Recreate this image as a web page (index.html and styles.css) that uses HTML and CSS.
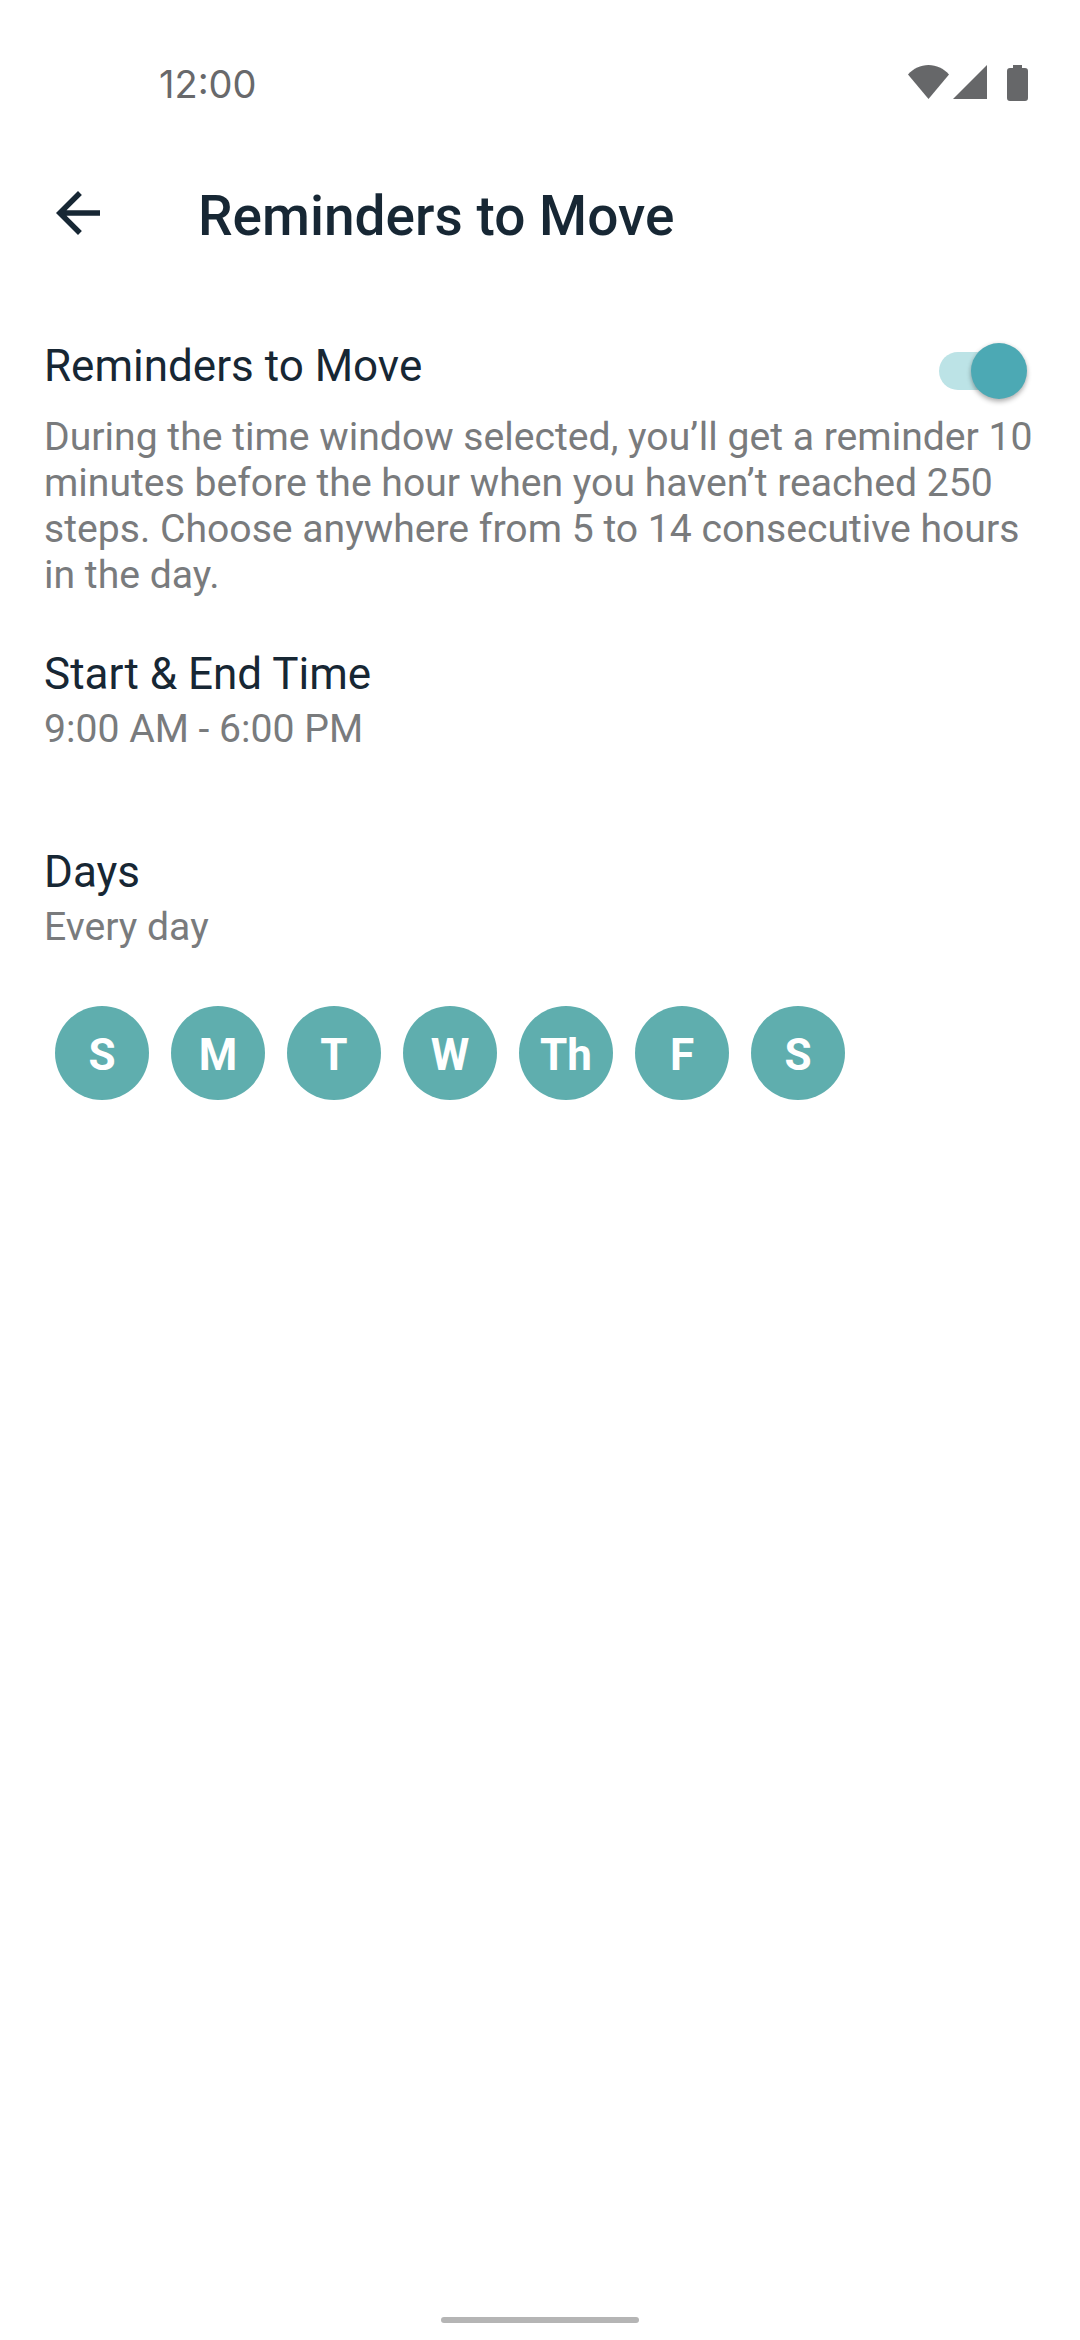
FILE: index.html
```html
<!DOCTYPE html>
<html lang="en">
<head>
<meta charset="utf-8">
<title>Reminders to Move</title>
<link rel="stylesheet" href="styles.css">
</head>
<body>
<div class="screen">
  <header class="status-bar">
    <span class="clock">12:00</span>
    <div class="status-icons">
      <svg class="ic-wifi" viewBox="0 0 41 34" aria-hidden="true"><path d="M0 9.500C5.500 3.500 12.500 0 20.500 0S35.500 3.500 41 9.500L20.500 34z"/></svg>
      <svg class="ic-signal" viewBox="0 0 34 34" aria-hidden="true"><path d="M34 0v34H0z"/></svg>
      <svg class="ic-battery" viewBox="0 0 21 36" aria-hidden="true"><path d="M6 0h9v3h3a3 3 0 0 1 3 3v27a3 3 0 0 1-3 3H3a3 3 0 0 1-3-3V6a3 3 0 0 1 3-3h3z"/></svg>
    </div>
  </header>

  <div class="app-bar">
    <svg class="ic-back" viewBox="0 0 24 24" aria-hidden="true"><path d="M20 11H7.830l5.590-5.590L12 4l-8 8 8 8 1.410-1.410L7.830 13H20v-2z"/></svg>
    <h1 class="app-title">Reminders to Move</h1>
  </div>

  <main class="content">
    <section class="toggle-section">
      <div class="toggle-row">
        <h2 class="label">Reminders to Move</h2>
        <div class="switch"><span class="switch-track"></span><span class="switch-thumb"></span></div>
      </div>
      <p class="desc">During the time window selected, you’ll get a reminder 10 minutes before the hour when you haven’t reached 250 steps. Choose anywhere from 5 to 14 consecutive hours in the day.</p>
    </section>

    <section class="time-section">
      <h2 class="label">Start &amp; End Time</h2>
      <p class="value">9:00 AM - 6:00 PM</p>
    </section>

    <section class="days-section">
      <h2 class="label">Days</h2>
      <p class="value">Every day</p>
      <div class="day-row">
        <span class="day">S</span>
        <span class="day">M</span>
        <span class="day">T</span>
        <span class="day">W</span>
        <span class="day">Th</span>
        <span class="day">F</span>
        <span class="day">S</span>
      </div>
    </section>
  </main>

  <div class="home-indicator"></div>
</div>
</body>
</html>
```

FILE: styles.css
```css
* { box-sizing: border-box; }
html, body { margin: 0; padding: 0; background: #fff; }
.screen {
  width: 1080px;
  height: 2340px;
  display: flex;
  flex-direction: column;
  font-family: Roboto, "Liberation Sans", sans-serif;
  color: #172734;
  overflow: hidden;
}
.status-bar {
  height: 100px;
  padding: 65px 52px 0 159px;
  display: flex;
  justify-content: space-between;
  align-items: flex-start;
}
.clock {
  font-family: Inter, Roboto, sans-serif;
  font-size: 38px;
  line-height: 38px;
  color: #68696b;
}
.status-icons { display: flex; align-items: flex-start; }
.status-icons svg { fill: #666769; display: block; }
.ic-wifi { width: 41px; height: 34px; margin-right: 4px; }
.ic-signal { width: 34px; height: 34px; margin-right: 20px; }
.ic-battery { width: 21px; height: 36px; }
.app-bar {
  height: 226px;
  padding: 6px 0 0 45px;
  display: flex;
  align-items: center;
}
.ic-back { width: 66px; height: 66px; fill: #172734; flex: none; margin-bottom: 6px; }
.app-title {
  margin: 0 0 0 87px;
  font-size: 55px;
  line-height: 70px;
  font-weight: 500;
}
.content { padding: 12px 0 0 44px; flex: 1; }
.label {
  margin: 0;
  font-size: 44px;
  line-height: 56px;
  font-weight: 400;
}
.toggle-row {
  display: flex;
  justify-content: space-between;
  align-items: center;
  height: 56px;
  padding-right: 52px;
}
.switch { position: relative; width: 89px; height: 56px; }
.switch-track {
  position: absolute;
  left: 0;
  top: 14px;
  width: 76px;
  height: 38px;
  border-radius: 19px;
  background: #bce3e6;
}
.switch-thumb {
  position: absolute;
  right: 1px;
  top: 5px;
  width: 56px;
  height: 56px;
  border-radius: 50%;
  background: #4ca9b4;
  box-shadow: 0 3px 5px rgba(0,0,0,.28), 0 0 4px rgba(0,0,0,.08);
}
.desc {
  margin: 20px 0 0;
  width: 1010px;
  font-size: 39.15px;
  line-height: 46px;
  color: #797b7d;
}
.time-section { margin-top: 48px; }
.value {
  margin: 2px 0 0;
  font-size: 39.15px;
  line-height: 50px;
  color: #797b7d;
}
.days-section { margin-top: 90px; }
.day-row {
  display: flex;
  gap: 22px;
  padding-left: 11px;
  margin-top: 54px;
}
.day {
  width: 94px;
  height: 94px;
  padding-top: 3px;
  border-radius: 50%;
  background: #5faeae;
  color: #fff;
  font-size: 44px;
  font-weight: 700;
  display: flex;
  align-items: center;
  justify-content: center;
}
.home-indicator {
  width: 198px;
  height: 6px;
  margin: 0 auto 17px;
  border-radius: 3px;
  background: #b5b5b5;
}
```
